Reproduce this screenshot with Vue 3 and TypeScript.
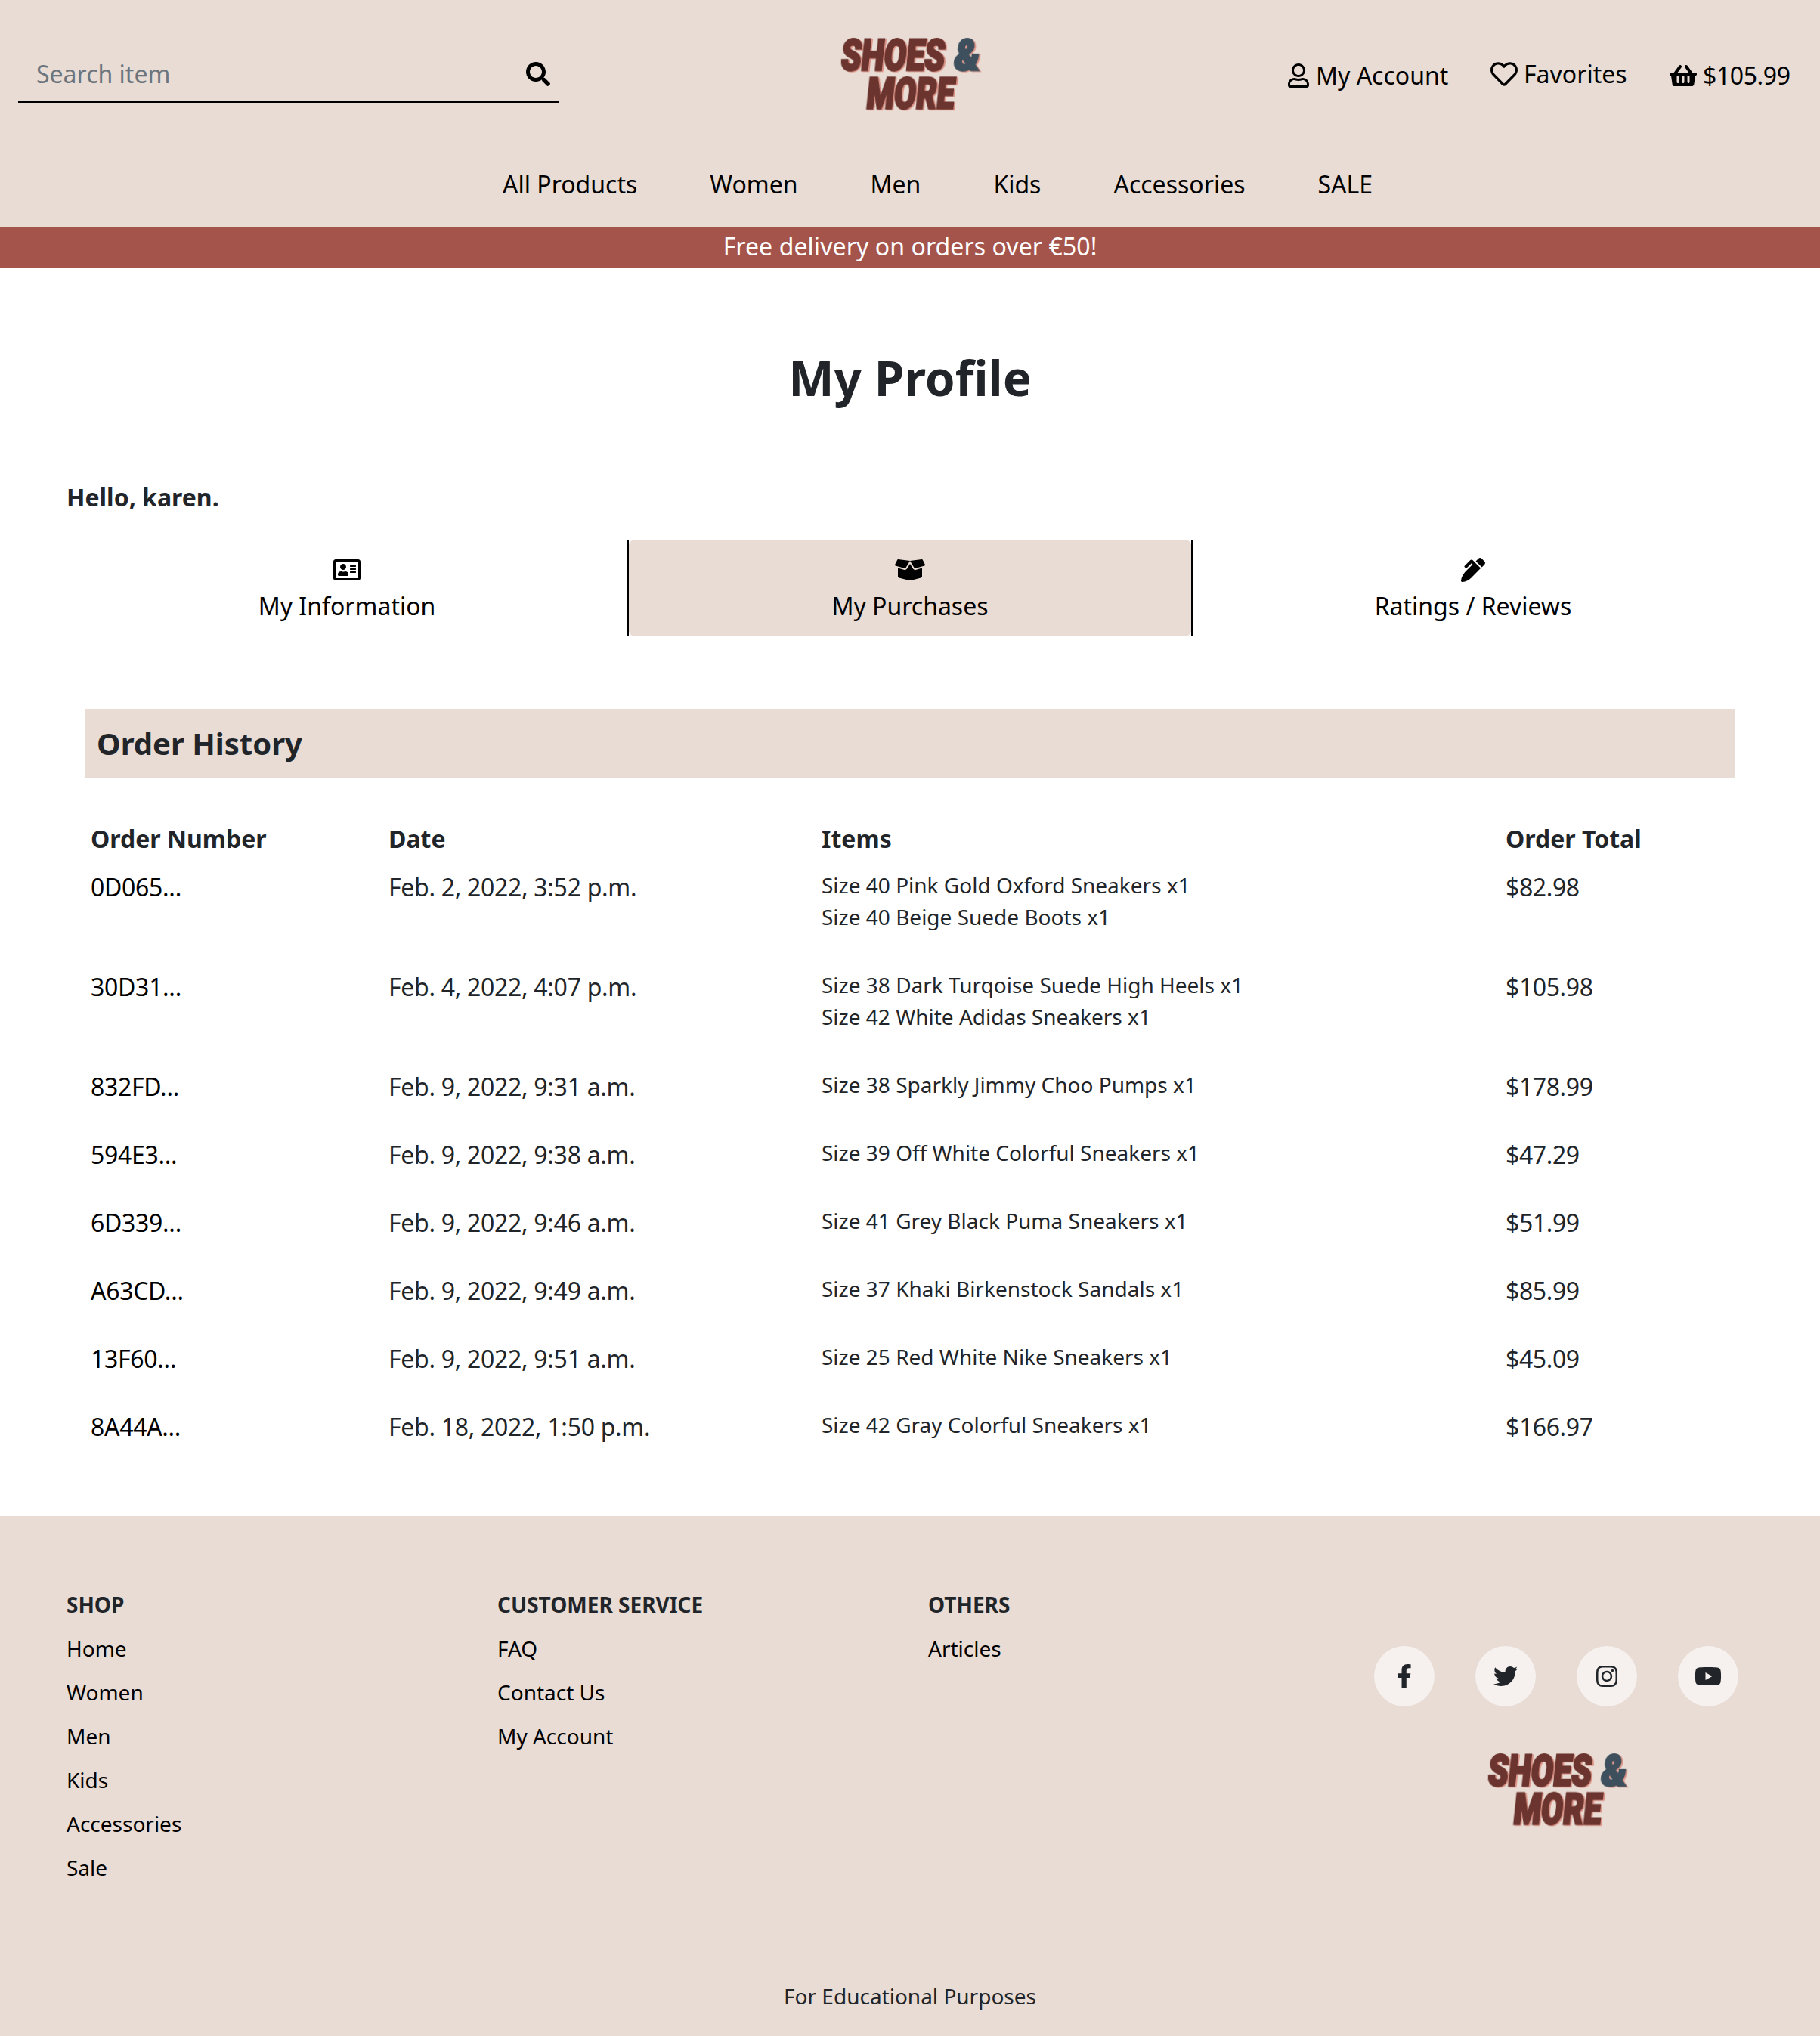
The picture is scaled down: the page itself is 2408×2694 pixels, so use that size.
<script setup lang="ts">
interface Icon {
  w: number
  d: string
}

interface Order {
  id: string
  date: string
  items: string[]
  total: string
}

const icons: Record<string, Icon> = {
  search: { w: 512, d: 'M505 442.7L405.3 343c-4.5-4.5-10.6-7-17-7H372c27.6-35.3 44-79.7 44-128C416 93.1 322.9 0 208 0S0 93.1 0 208s93.1 208 208 208c48.3 0 92.7-16.4 128-44v16.3c0 6.4 2.5 12.5 7 17l99.7 99.7c9.4 9.4 24.6 9.4 33.9 0l28.3-28.3c9.4-9.4 9.4-24.6.1-34zM208 336c-70.7 0-128-57.2-128-128 0-70.7 57.2-128 128-128 70.7 0 128 57.2 128 128 0 70.7-57.2 128-128 128z' },
  user: { w: 448, d: 'M313.6 304c-28.7 0-42.5 16-89.6 16-47.1 0-60.8-16-89.6-16C60.2 304 0 364.2 0 438.4V464c0 26.5 21.5 48 48 48h352c26.5 0 48-21.5 48-48v-25.6c0-74.2-60.2-134.4-134.4-134.4zM400 464H48v-25.6c0-47.6 38.8-86.4 86.4-86.4 14.6 0 38.3 16 89.6 16 51.7 0 74.9-16 89.6-16 47.6 0 86.4 38.8 86.4 86.4V464zM224 288c79.5 0 144-64.5 144-144S303.5 0 224 0 80 64.5 80 144s64.5 144 144 144zm0-240c52.9 0 96 43.1 96 96s-43.1 96-96 96-96-43.1-96-96 43.1-96 96-96z' },
  heart: { w: 512, d: 'M458.4 64.3C400.6 15.7 311.3 23 256 79.3 200.7 23 111.4 15.6 53.6 64.3-21.6 127.6-10.6 230.8 43 285.5l175.4 178.7c10 10.2 23.4 15.9 37.6 15.9 14.3 0 27.6-5.6 37.6-15.8L469 285.6c53.5-54.7 64.7-157.9-10.6-221.3zm-23.6 187.5L259.4 430.5c-2.4 2.4-4.4 2.4-6.8 0L77.2 251.8c-36.5-37.2-43.9-107.6 7.3-150.7 38.9-32.7 98.9-27.8 136.5 10.5l35 35.7 35-35.7c37.8-38.5 97.8-43.2 136.5-10.6 51.1 43.1 43.5 113.9 7.3 150.8z' },
  basket: { w: 576, d: 'M576 216v16c0 13.255-10.745 24-24 24h-8l-26.113 182.788C514.509 462.435 494.257 480 470.37 480H105.63c-23.887 0-44.139-17.565-47.518-41.212L32 256h-8c-13.255 0-24-10.745-24-24v-16c0-13.255 10.745-24 24-24h67.341l106.78-146.821c10.395-14.292 30.407-17.453 44.701-7.058 14.293 10.395 17.453 30.408 7.058 44.701L170.477 192h235.046L326.12 82.821c-10.395-14.292-7.234-34.306 7.059-44.701 14.291-10.395 34.306-7.235 44.701 7.058L484.659 192H552c13.255 0 24 10.745 24 24zM312 392V280c0-13.255-10.745-24-24-24s-24 10.745-24 24v112c0 13.255 10.745 24 24 24s24-10.745 24-24zm112 0V280c0-13.255-10.745-24-24-24s-24 10.745-24 24v112c0 13.255 10.745 24 24 24s24-10.745 24-24zm-224 0V280c0-13.255-10.745-24-24-24s-24 10.745-24 24v112c0 13.255 10.745 24 24 24s24-10.745 24-24z' },
  card: { w: 576, d: 'M528 32H48C21.5 32 0 53.5 0 80v352c0 26.5 21.5 48 48 48h480c26.5 0 48-21.5 48-48V80c0-26.5-21.5-48-48-48zm0 400H48V80h480v352zM208 256c35.3 0 64-28.7 64-64s-28.7-64-64-64-64 28.7-64 64 28.7 64 64 64zm-89.6 128h179.2c12.4 0 22.4-8.6 22.4-19.2v-19.2c0-31.8-30.1-57.6-67.2-57.6-10.8 0-18.7 8-44.8 8-26.9 0-33.4-8-44.8-8-37.1 0-67.2 25.8-67.2 57.6v19.2c0 10.6 10 19.2 22.4 19.2zM360 320h112c4.4 0 8-3.6 8-8v-16c0-4.4-3.6-8-8-8H360c-4.4 0-8 3.6-8 8v16c0 4.4 3.6 8 8 8zm0-64h112c4.4 0 8-3.6 8-8v-16c0-4.4-3.6-8-8-8H360c-4.4 0-8 3.6-8 8v16c0 4.4 3.6 8 8 8zm0-64h112c4.4 0 8-3.6 8-8v-16c0-4.4-3.6-8-8-8H360c-4.4 0-8 3.6-8 8v16c0 4.4 3.6 8 8 8z' },
  box: { w: 640, d: 'M425.7 256c-16.9 0-32.8-9-41.4-23.4L320 126l-64.2 106.6c-8.7 14.5-24.6 23.5-41.5 23.5-4.5 0-9-.6-13.3-1.9L64 215v178c0 14.7 10 27.5 24.2 31l216.2 54.1c10.2 2.5 20.9 2.5 31 0L551.8 424c14.2-3.6 24.2-16.4 24.2-31V215l-137 39.1c-4.3 1.3-8.8 1.9-13.3 1.9zm212.6-112.2L586.8 41c-3.1-6.2-9.8-9.8-16.7-8.9L320 64l91.7 152.1c3.8 6.3 11.4 9.3 18.5 7.3l197.9-56.5c9.9-2.9 14.7-13.9 10.2-23.1zM53.2 41L1.7 143.8c-4.6 9.2.3 20.2 10.1 23l197.9 56.5c7.1 2 14.7-1 18.5-7.3L320 64 69.8 32.1c-6.9-.8-13.5 2.7-16.6 8.9z' },
  pen: { w: 512, d: 'M497.94 74.17l-60.11-60.11c-18.75-18.75-49.16-18.75-67.91 0l-56.55 56.55 128.02 128.02 56.55-56.55c18.75-18.75 18.75-49.15 0-67.91zm-246.8-20.53c-15.62-15.62-40.94-15.62-56.56 0L75.8 172.43c-6.25 6.25-6.25 16.38 0 22.62l22.63 22.63c6.25 6.25 16.38 6.25 22.63 0l101.82-101.82 22.63 22.62L93.95 290.03A327.038 327.038 0 0 0 .17 485.11l-.03.23c-1.7 15.28 11.21 28.2 26.49 26.51a327.02 327.02 0 0 0 195.34-93.8l196.79-196.79-82.77-82.77-84.85-84.65z' },
  facebook: { w: 320, d: 'M279.14 288l14.22-92.66h-88.91v-60.13c0-25.35 12.42-50.06 52.24-50.06h40.42V6.26S260.43 0 225.36 0c-73.22 0-121.08 44.38-121.08 124.72v70.62H22.89V288h81.39v224h100.17V288z' },
  twitter: { w: 512, d: 'M459.37 151.716c.325 4.548.325 9.097.325 13.645 0 138.72-105.583 298.558-298.558 298.558-59.452 0-114.68-17.219-161.137-47.106 8.447.974 16.568 1.299 25.34 1.299 49.055 0 94.213-16.568 130.274-44.832-46.132-.975-84.792-31.188-98.112-72.772 6.498.974 12.995 1.624 19.818 1.624 9.421 0 18.843-1.3 27.614-3.573-48.081-9.747-84.143-51.98-84.143-102.985v-1.299c13.969 7.797 30.214 12.67 47.431 13.319-28.264-18.843-46.781-51.005-46.781-87.391 0-19.492 5.197-37.36 14.294-52.954 51.655 63.675 129.3 105.258 216.365 109.807-1.624-7.797-2.599-15.918-2.599-24.04 0-57.828 46.782-104.934 104.934-104.934 30.213 0 57.502 12.67 76.67 33.137 23.715-4.548 46.456-13.32 66.599-25.34-7.798 24.366-24.366 44.833-46.132 57.827 21.117-2.273 41.584-8.122 60.426-16.243-14.292 20.791-32.161 39.308-52.628 54.253z' },
  instagram: { w: 448, d: 'M224.1 141c-63.6 0-114.9 51.3-114.9 114.9s51.3 114.9 114.9 114.9S339 319.5 339 255.9 287.7 141 224.1 141zm0 189.6c-41.1 0-74.7-33.5-74.7-74.7s33.5-74.7 74.7-74.7 74.7 33.5 74.7 74.7-33.6 74.7-74.7 74.7zm146.4-194.3c0 14.9-12 26.8-26.8 26.8-14.9 0-26.8-12-26.8-26.8s12-26.8 26.8-26.8 26.8 12 26.8 26.8zm76.1 27.2c-1.7-35.9-9.9-67.7-36.2-93.9-26.2-26.2-58-34.4-93.9-36.2-37-2.1-147.9-2.1-184.9 0-35.8 1.7-67.6 9.9-93.9 36.1s-34.4 58-36.2 93.9c-2.1 37-2.1 147.9 0 184.9 1.7 35.9 9.9 67.7 36.2 93.9s58 34.4 93.9 36.2c37 2.1 147.9 2.1 184.9 0 35.9-1.7 67.7-9.9 93.9-36.2 26.2-26.2 34.4-58 36.2-93.9 2.1-37 2.1-147.8 0-184.8zM398.8 388c-7.8 19.6-22.9 34.7-42.6 42.6-29.5 11.7-99.5 9-132.1 9s-102.7 2.6-132.1-9c-19.6-7.8-34.7-22.9-42.6-42.6-11.7-29.5-9-99.5-9-132.1s-2.6-102.7 9-132.1c7.8-19.6 22.9-34.7 42.6-42.6 29.5-11.7 99.5-9 132.1-9s102.7-2.6 132.1 9c19.6 7.8 34.7 22.9 42.6 42.6 11.7 29.5 9 99.5 9 132.1s2.7 102.7-9 132.1z' },
  youtube: { w: 576, d: 'M549.655 124.083c-6.281-23.65-24.787-42.276-48.284-48.597C458.781 64 288 64 288 64S117.22 64 74.629 75.486c-23.497 6.322-42.003 24.947-48.284 48.597-11.412 42.867-11.412 132.305-11.412 132.305s0 89.438 11.412 132.305c6.281 23.65 24.787 41.5 48.284 47.821C117.22 448 288 448 288 448s170.78 0 213.371-11.486c23.497-6.321 42.003-24.171 48.284-47.821 11.412-42.867 11.412-132.305 11.412-132.305s0-89.438-11.412-132.305zm-317.51 213.508V175.185l142.739 81.205-142.739 81.201z' },
}

const box = (name: string): string => `0 0 ${icons[name].w} 512`

const nav: string[] = ['All Products', 'Women', 'Men', 'Kids', 'Accessories', 'SALE']

const userLinks = [
  { icon: 'user', label: 'My Account' },
  { icon: 'heart', label: 'Favorites' },
  { icon: 'basket', label: '$105.99' },
]

const tabs = [
  { icon: 'card', label: 'My Information', active: false },
  { icon: 'box', label: 'My Purchases', active: true },
  { icon: 'pen', label: 'Ratings / Reviews', active: false },
]

const orders: Order[] = [
  { id: '0D065...', date: 'Feb. 2, 2022, 3:52 p.m.', items: ['Size 40 Pink Gold Oxford Sneakers x1', 'Size 40 Beige Suede Boots x1'], total: '$82.98' },
  { id: '30D31...', date: 'Feb. 4, 2022, 4:07 p.m.', items: ['Size 38 Dark Turqoise Suede High Heels x1', 'Size 42 White Adidas Sneakers x1'], total: '$105.98' },
  { id: '832FD...', date: 'Feb. 9, 2022, 9:31 a.m.', items: ['Size 38 Sparkly Jimmy Choo Pumps x1'], total: '$178.99' },
  { id: '594E3...', date: 'Feb. 9, 2022, 9:38 a.m.', items: ['Size 39 Off White Colorful Sneakers x1'], total: '$47.29' },
  { id: '6D339...', date: 'Feb. 9, 2022, 9:46 a.m.', items: ['Size 41 Grey Black Puma Sneakers x1'], total: '$51.99' },
  { id: 'A63CD...', date: 'Feb. 9, 2022, 9:49 a.m.', items: ['Size 37 Khaki Birkenstock Sandals x1'], total: '$85.99' },
  { id: '13F60...', date: 'Feb. 9, 2022, 9:51 a.m.', items: ['Size 25 Red White Nike Sneakers x1'], total: '$45.09' },
  { id: '8A44A...', date: 'Feb. 18, 2022, 1:50 p.m.', items: ['Size 42 Gray Colorful Sneakers x1'], total: '$166.97' },
]

const footerColumns = [
  { title: 'SHOP', links: ['Home', 'Women', 'Men', 'Kids', 'Accessories', 'Sale'] },
  { title: 'CUSTOMER SERVICE', links: ['FAQ', 'Contact Us', 'My Account'] },
  { title: 'OTHERS', links: ['Articles'] },
]

const socials: string[] = ['facebook', 'twitter', 'instagram', 'youtube']
</script>

<template>
  <div class="page">
    <header class="header">
      <div class="top">
        <form class="search" @submit.prevent>
          <input type="text" placeholder="Search item" />
          <button type="submit" aria-label="Search">
            <svg class="icon" :viewBox="box('search')"><path :d="icons.search.d" /></svg>
          </button>
        </form>
        <svg class="logo" viewBox="0 0 200 110">
          <g transform="skewX(-6)">
            <text x="12.5" y="50" textLength="137" lengthAdjust="spacingAndGlyphs">SHOES</text>
            <text class="amp" x="162" y="50" textLength="34" lengthAdjust="spacingAndGlyphs">&amp;</text>
            <text x="51.5" y="100" textLength="116" lengthAdjust="spacingAndGlyphs">MORE</text>
          </g>
        </svg>
        <div class="user-links">
          <a v-for="l in userLinks" :key="l.label" :class="['user-link', l.icon]">
            <svg class="icon" :viewBox="box(l.icon)"><path :d="icons[l.icon].d" /></svg>
            <span>{{ l.label }}</span>
          </a>
        </div>
      </div>
      <nav class="nav">
        <a v-for="n in nav" :key="n">{{ n }}</a>
      </nav>
    </header>
    <div class="banner">Free delivery on orders over €50!</div>

    <main>
      <h1>My Profile</h1>
      <p class="hello">Hello, karen.</p>
      <div class="tabs">
        <div v-for="t in tabs" :key="t.label" :class="['tab', { active: t.active }]">
          <a>
            <svg class="icon" :viewBox="box(t.icon)"><path :d="icons[t.icon].d" /></svg>
            <span>{{ t.label }}</span>
          </a>
        </div>
      </div>
      <section class="history">
        <h2>Order History</h2>
        <table>
          <colgroup>
            <col class="c1" /><col class="c2" /><col class="c3" /><col />
          </colgroup>
          <thead>
            <tr><th>Order Number</th><th>Date</th><th>Items</th><th>Order Total</th></tr>
          </thead>
          <tbody>
            <tr v-for="o in orders" :key="o.id">
              <td class="link">{{ o.id }}</td>
              <td class="date">{{ o.date }}</td>
              <td>
                <ul><li v-for="i in o.items" :key="i">{{ i }}</li></ul>
              </td>
              <td class="total">{{ o.total }}</td>
            </tr>
          </tbody>
        </table>
      </section>
    </main>

    <footer class="footer">
      <div class="columns">
        <div v-for="c in footerColumns" :key="c.title" class="column">
          <h3>{{ c.title }}</h3>
          <a v-for="l in c.links" :key="l">{{ l }}</a>
        </div>
        <div class="brand-column">
          <div class="socials">
            <a v-for="s in socials" :key="s" class="social">
              <svg class="icon" :viewBox="box(s)"><path :d="icons[s].d" /></svg>
            </a>
          </div>
          <svg class="logo" viewBox="0 0 200 110">
            <g transform="skewX(-6)">
              <text x="12.5" y="50" textLength="137" lengthAdjust="spacingAndGlyphs">SHOES</text>
              <text class="amp" x="162" y="50" textLength="34" lengthAdjust="spacingAndGlyphs">&amp;</text>
              <text x="51.5" y="100" textLength="116" lengthAdjust="spacingAndGlyphs">MORE</text>
            </g>
          </svg>
        </div>
      </div>
      <p class="note">For Educational Purposes</p>
    </footer>
  </div>
</template>

<style>
body {
  margin: 0;
  background: #fff;
}
</style>

<style scoped>
* {
  box-sizing: border-box;
}
h1, h2, h3, p, ul {
  margin: 0;
  padding: 0;
}
/* The page is laid out at 1204px and zoomed to twice that size. */
.page {
  width: 1204px;
  height: 1347px;
  zoom: 2;
  background: #fff;
  color: #212529;
  font: 16px/24px "Noto Sans", sans-serif;
}
.icon {
  display: block;
  height: 16px;
  fill: currentColor;
  flex: none;
}
.logo {
  display: block;
  width: 100px;
  height: 55px;
  flex: none;
  overflow: visible;
}
.logo text {
  font: 900 57px Roboto, sans-serif;
  fill: #6b342e;
  stroke: #6b342e;
  stroke-width: 3px;
  filter: drop-shadow(2px 1.5px 0 #dc9488);
}
.logo .amp {
  fill: #3e505d;
  stroke: #3e505d;
}

.header {
  height: 150px;
  background: #e8dcd4;
  color: #000;
}
.top {
  display: flex;
  height: 110px;
  padding-left: 12px;
}
.search {
  display: flex;
  align-items: center;
  width: 358px;
  height: 38px;
  margin-top: 30px;
  padding: 1px 6px 0 12px;
  border-bottom: 1px solid #000;
}
.search input {
  flex: 1;
  min-width: 0;
  height: 24px;
  padding: 0;
  border: 0;
  outline: 0;
  background: none;
  font: inherit;
}
.search input::placeholder {
  color: #6c757d;
  opacity: 1;
}
.search button {
  padding: 0;
  border: 0;
  background: none;
  color: #000;
}
.top .logo {
  margin: 21.5px 0 0 182px;
}
.user-links {
  display: flex;
  align-items: flex-start;
  margin-left: 200px;
}
.user-link {
  display: flex;
  align-items: flex-start;
  gap: 4px;
  margin-top: 38px;
  white-space: nowrap;
}
.user-link .icon {
  margin-top: 4px;
}
.user-link.user {
  width: 134px;
  gap: 4.5px;
}
.user-link.heart {
  width: 118.5px;
  margin-top: 37px;
}
.user-link.basket {
  letter-spacing: -0.2px;
}
.heart .icon {
  height: 18px;
  margin-top: 3px;
}
.nav {
  display: flex;
  gap: 48px;
  padding-left: 332.5px;
}
.banner {
  height: 27px;
  padding-top: 1px;
  background: #a5544b;
  color: #fff;
  letter-spacing: 0.04px;
  text-align: center;
}

h1 {
  padding-top: 53.5px;
  font-size: 32px;
  line-height: 38.5px;
  text-align: center;
}
.hello {
  margin: 48px 0 16px;
  padding-left: 44px;
  font-weight: 700;
}
.tabs {
  display: grid;
  grid-template-columns: 1fr 374px 1fr;
  margin: 0 44px;
  color: #000;
}
.tab a {
  display: flex;
  flex-direction: column;
  align-items: center;
  height: 64px;
  padding-top: 12px;
}
.tab span {
  margin-top: 4px;
}
.tab.active {
  border: solid #000;
  border-width: 0 1px;
}
.tab.active a {
  border-radius: 4px;
  background: #e8dcd4;
}
.history {
  margin: 48px 56px 0;
}
h2 {
  padding: 8px;
  background: #e8dcd4;
  font-size: 20px;
  line-height: 30px;
}
table {
  width: 100%;
  margin-top: 24px;
  table-layout: fixed;
  border-spacing: 0;
}
.c1 { width: 197px; }
.c2 { width: 286.5px; }
.c3 { width: 452.5px; }
th, td {
  padding: 4px;
  text-align: left;
  vertical-align: top;
}
.link {
  color: #000;
  letter-spacing: -0.15px;
}
.date {
  letter-spacing: -0.15px;
}
.total {
  letter-spacing: -0.2px;
}
ul {
  margin-bottom: 16px;
  list-style: none;
}
li {
  font-size: 14px;
  line-height: 21px;
}

.footer {
  height: 344px;
  margin-top: 30px;
  padding-top: 48px;
  background: #e8dcd4;
  font-size: 14px;
  line-height: 21px;
}
.columns {
  display: grid;
  grid-template-columns: 285px 285px 295px 1fr;
  height: 259px;
  padding-left: 44px;
}
.column {
  display: flex;
  flex-direction: column;
  gap: 8px;
}
.column a {
  color: #000;
}
h3 {
  font-size: 14px;
}
.brand-column {
  padding-top: 38px;
}
.socials {
  display: flex;
  gap: 27px;
}
.social {
  display: flex;
  align-items: center;
  justify-content: center;
  width: 40px;
  height: 40px;
  border-radius: 50%;
  background: #f6f1ee;
}
.brand-column .logo {
  margin: 27.5px 0 0 71px;
}
.note {
  text-align: center;
}
</style>
